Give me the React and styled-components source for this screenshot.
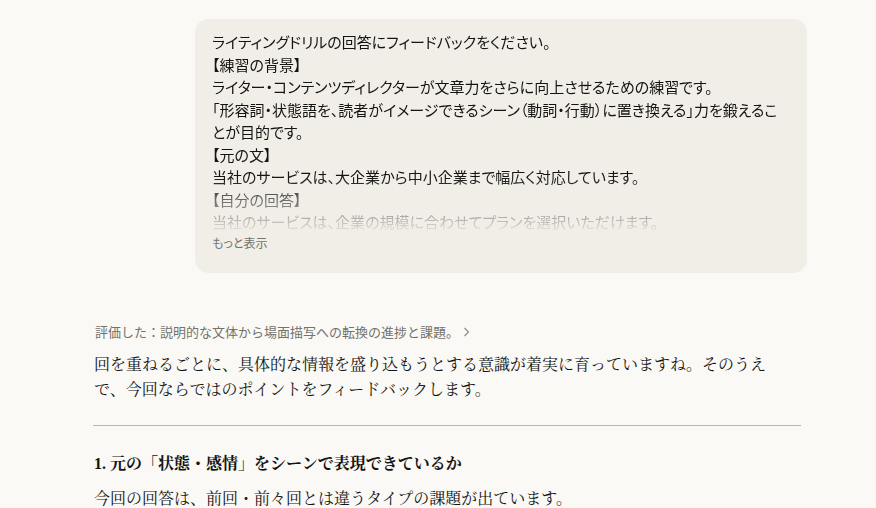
import React from 'react';
import styled, { createGlobalStyle } from 'styled-components';

const GlobalStyle = createGlobalStyle`
  html, body {
    margin: 0;
    padding: 0;
    background: #faf9f5;
  }
  body {
    font-family: "Liberation Serif", "Noto Serif CJK JP", "Noto Sans CJK JP", serif;
    color: #141413;
  }
`;

const Page = styled.div`
  padding: 19px 0 0 93px;
  width: 708px;
`;

const UserRow = styled.div`
  display: flex;
  justify-content: flex-end;
  margin-right: -6px;
`;

const Bubble = styled.div`
  width: 612px;
  box-sizing: border-box;
  background: #f0eee6;
  border-radius: 14px;
  padding: 12px 17px 21px;
  font-family: "Noto Sans CJK JP", sans-serif;
`;

// the long prompt fades out towards the bottom
const Clipped = styled.div`
  max-height: 203px;
  overflow: hidden;
  font-size: 15px;
  line-height: 22.5px;
  font-feature-settings: "palt";
  -webkit-mask-image: linear-gradient(to bottom, #000 72%, transparent 100%);
  mask-image: linear-gradient(to bottom, #000 72%, transparent 100%);

  p {
    margin: 0;
  }
`;

const MoreButton = styled.button`
  display: block;
  margin-top: 0;
  padding: 0;
  border: none;
  background: none;
  font-family: "Noto Sans CJK JP", sans-serif;
  font-size: 12px;
  line-height: 18px;
  font-feature-settings: "palt";
  color: #73726c;
  cursor: pointer;
`;

const Reply = styled.div`
  margin-top: 49px;
`;

const Thought = styled.div`
  display: flex;
  align-items: center;
  gap: 4px;
  font-family: "Noto Sans CJK JP", sans-serif;
  font-size: 13px;
  line-height: 20px;
  color: #73726c;
  padding-left: 2px;

  svg {
    margin-top: 1px;
  }
`;

const Para = styled.p`
  margin: ${(p) => p.$top || 10}px 0 0;
  max-width: 700px;
  font-size: 16px;
  line-height: 25px;
  padding-left: 1px;
`;

const Divider = styled.hr`
  margin: 23px 0 0;
  border: none;
  border-top: 1px solid #b9b7b0;
`;

const Heading = styled.h3`
  margin: 25px 0 0;
  font-size: 16px;
  line-height: 25px;
  font-weight: 700;
  padding-left: 1px;
`;

function Chevron() {
  return (
    <svg width="7" height="10" viewBox="0 0 7 10" fill="none">
      <path d="M1.5 1l4 4-4 4" stroke="#8a8984" strokeWidth="1.1" />
    </svg>
  );
}

export default function App() {
  return (
    <>
      <GlobalStyle />
      <Page>
        <UserRow>
          <Bubble>
            <Clipped>
              <p>ライティングドリルの回答にフィードバックをください。</p>
              <p>【練習の背景】</p>
              <p>ライター・コンテンツディレクターが文章力をさらに向上させるための練習です。</p>
              <p>
                「形容詞・状態語を、読者がイメージできるシーン（動詞・行動）に置き換える」力を鍛えることが目的です。
              </p>
              <p>【元の文】</p>
              <p>当社のサービスは、大企業から中小企業まで幅広く対応しています。</p>
              <p>【自分の回答】</p>
              <p>当社のサービスは、企業の規模に合わせてプランを選択いただけます。</p>
            </Clipped>
            <MoreButton>もっと表示</MoreButton>
          </Bubble>
        </UserRow>

        <Reply>
          <Thought>
            評価した：説明的な文体から場面描写への転換の進捗と課題。
            <Chevron />
          </Thought>
          <Para>
            回を重ねるごとに、具体的な情報を盛り込もうとする意識が着実に育っていますね。そのうえで、今回ならではのポイントをフィードバックします。
          </Para>
          <Divider />
          <Heading>1. 元の「状態・感情」をシーンで表現できているか</Heading>
          <Para>今回の回答は、前回・前々回とは違うタイプの課題が出ています。</Para>
        </Reply>
      </Page>
    </>
  );
}
